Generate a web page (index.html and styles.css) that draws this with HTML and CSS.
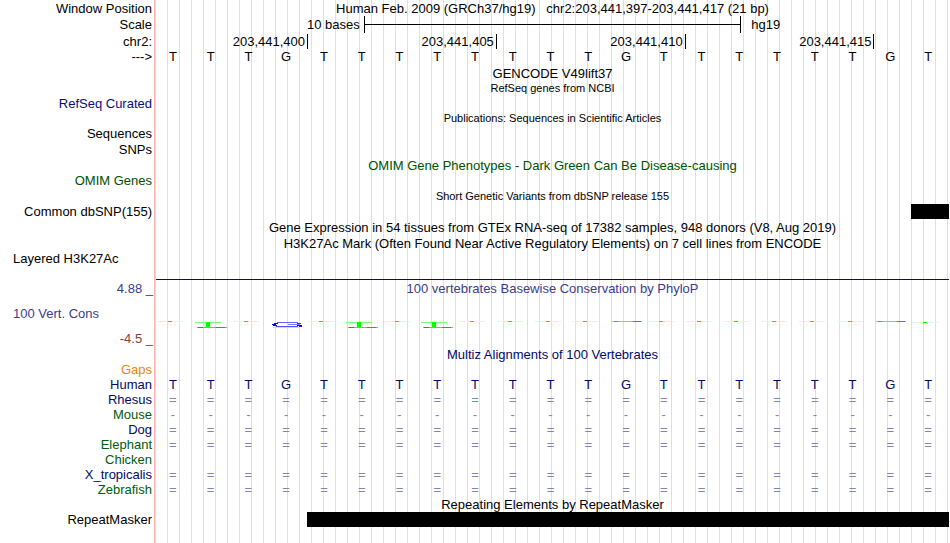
FILE: index.html
```
<!DOCTYPE html>
<html lang="en">
<head>
    <meta charset="UTF-8">
    <meta name="viewport" content="width=device-width, initial-scale=1.0">
    <title>chr2:203,441,397-203,441,417 - Human hg19</title>
    <link rel="stylesheet" href="styles.css">
</head>
<body>
    <svg class="symbols" aria-hidden="true">
        <symbol id="t-flat" viewBox="0 0 37 8">
            <rect x="1" y="0" width="26" height="1" fill="#e0f8e4"/>
            <rect x="12" y="0" width="4" height="1" fill="#14ee14"/>
        </symbol>
        <symbol id="t-low" viewBox="0 0 37 8">
            <rect x="1" y="1" width="26" height="1" fill="#e0f8e4"/>
            <rect x="12" y="1" width="4" height="1" fill="#14ee14"/>
        </symbol>
        <symbol id="t-tall" viewBox="0 0 37 8">
            <rect x="1" y="1" width="26" height="1" fill="#78ff78"/>
            <rect x="12" y="1" width="4" height="5" fill="#00ff00"/>
            <rect x="3" y="6" width="30" height="1" fill="#9696f0"/>
            <rect x="4" y="6" width="5" height="1" fill="#5a5ae6"/>
            <rect x="22" y="6" width="9" height="1" fill="#6464f0"/>
        </symbol>
        <symbol id="g-flat" viewBox="0 0 37 8">
            <rect x="3" y="0" width="30" height="1" fill="#aaaaf5"/>
            <rect x="5" y="0" width="4" height="1" fill="#7878e6"/>
            <rect x="24" y="0" width="8" height="1" fill="#6464f0"/>
        </symbol>
        <symbol id="g-tall" viewBox="0 0 37 8">
            <rect x="8" y="1" width="21" height="1" fill="#6464ff"/>
            <rect x="5" y="2" width="4" height="1" fill="#0000ff"/>
            <rect x="28" y="2" width="4" height="1" fill="#2828ff"/>
            <rect x="3" y="3" width="4" height="1" fill="#0000ff"/>
            <rect x="19" y="3" width="12" height="1" fill="#7878ff"/>
            <rect x="4" y="4" width="4" height="1" fill="#0000ff"/>
            <rect x="28" y="4" width="5" height="1" fill="#0000ff"/>
            <rect x="7" y="5" width="22" height="1" fill="#5050ff"/>
            <rect x="30" y="5" width="3" height="1" fill="#1414ff"/>
            <rect x="4" y="6" width="26" height="1" fill="#dcdccc"/>
        </symbol>
    </svg>

    <main class="browser">
        <div class="row title-row">
            <div class="label">Window Position</div>
            <div class="title">Human Feb. 2009 (GRCh37/hg19) &nbsp; chr2:203,441,397-203,441,417 (21 bp)</div>
        </div>
        <div class="row ruler-row">
            <div class="label">Scale</div>
            <div class="scale">
                <span class="scale-length">10 bases</span>
                <span class="scale-bar"></span>
                <span class="scale-db">hg19</span>
            </div>
        </div>
        <div class="row title-row">
            <div class="label">chr2:</div>
            <div class="ruler">
                <span class="tick first">203,441,400</span>
                <span class="tick">203,441,405</span>
                <span class="tick">203,441,410</span>
                <span class="tick">203,441,415</span>
            </div>
        </div>
        <div class="row title-row base-row">
            <div class="label">---&gt;</div>
            <div class="bases" data-seq="TTTGTTTTTTTTGTTTTTTGT"></div>
        </div>

        <!-- genes -->
        <div class="row title-row">
            <div class="title">GENCODE V49lift37</div>
        </div>
        <div class="row">
            <div class="title small">RefSeq genes from NCBI</div>
        </div>
        <div class="row">
            <div class="label refseq">RefSeq Curated</div>
        </div>
        <div class="row">
            <div class="title small">Publications: Sequences in Scientific Articles</div>
        </div>
        <div class="row">
            <div class="label">Sequences</div>
        </div>
        <div class="row ruler-row">
            <div class="label">SNPs</div>
        </div>

        <!-- variants -->
        <div class="row">
            <div class="title omim">OMIM Gene Phenotypes - Dark Green Can Be Disease-causing</div>
        </div>
        <div class="row">
            <div class="label omim">OMIM Genes</div>
        </div>
        <div class="row title-row">
            <div class="title small">Short Genetic Variants from dbSNP release 155</div>
        </div>
        <div class="row">
            <div class="label">Common dbSNP(155)</div>
            <div class="items"><span class="item snp"></span></div>
        </div>

        <!-- expression and regulation -->
        <div class="row ruler-row">
            <div class="title">Gene Expression in 54 tissues from GTEx RNA-seq of 17382 samples, 948 donors (V8, Aug 2019)</div>
        </div>
        <div class="row">
            <div class="title">H3K27Ac Mark (Often Found Near Active Regulatory Elements) on 7 cell lines from ENCODE</div>
        </div>
        <div class="row signal-row">
            <div class="label left">Layered H3K27Ac</div>
            <div class="signal"></div>
        </div>

        <!-- conservation -->
        <div class="row ruler-row">
            <div class="label limit phylop">4.88 _</div>
            <div class="title phylop">100 vertebrates Basewise Conservation by PhyloP</div>
        </div>
        <div class="row cons-row">
            <div class="cons-labels">
                <div class="label left phylop">100 Vert. Cons</div>
                <div class="label limit negative">-4.5 _</div>
            </div>
            <div class="logo" data-logo="t-flat t-tall t-flat g-tall t-flat t-tall t-flat t-tall t-flat t-flat t-flat t-flat g-flat t-flat t-flat t-flat t-flat t-flat t-flat g-flat t-low"></div>
        </div>
        <div class="row">
            <div class="title species">Multiz Alignments of 100 Vertebrates</div>
        </div>
        <div class="row">
            <div class="label gaps">Gaps</div>
        </div>
        <div class="row">
            <div class="label species">Human</div>
            <div class="bases species" data-seq="TTTGTTTTTTTTGTTTTTTGT"></div>
        </div>
        <div class="row">
            <div class="label species">Rhesus</div>
            <div class="bases unaligned" data-seq="====================="></div>
        </div>
        <div class="row">
            <div class="label species-alt">Mouse</div>
            <div class="bases unaligned" data-seq="---------------------"></div>
        </div>
        <div class="row">
            <div class="label species">Dog</div>
            <div class="bases unaligned" data-seq="====================="></div>
        </div>
        <div class="row">
            <div class="label species-alt">Elephant</div>
            <div class="bases unaligned" data-seq="====================="></div>
        </div>
        <div class="row">
            <div class="label species-alt">Chicken</div>
        </div>
        <div class="row">
            <div class="label species">X_tropicalis</div>
            <div class="bases unaligned" data-seq="====================="></div>
        </div>
        <div class="row">
            <div class="label species-alt">Zebrafish</div>
            <div class="bases unaligned" data-seq="====================="></div>
        </div>

        <!-- repeats -->
        <div class="row">
            <div class="title">Repeating Elements by RepeatMasker</div>
        </div>
        <div class="row">
            <div class="label">RepeatMasker</div>
            <div class="items"><span class="item repeat"></span></div>
        </div>
    </main>

    <script>
        // One cell per base
        document.querySelectorAll('.bases').forEach((row) => {
            row.innerHTML = [...row.dataset.seq].map((base) => `<span>${base}</span>`).join('');
        });

        // Sequence logo of the conservation score
        document.querySelectorAll('.logo').forEach((row) => {
            row.innerHTML = row.dataset.logo.split(' ').map((id) => `<svg><use href="#${id}"/></svg>`).join('');
        });
    </script>
</body>
</html>
```
FILE: styles.css
```
* {
    box-sizing: border-box;
}
body {
    margin: 0;
    background-color: #fff;
    color: #000;
    font-family: "Liberation Sans", Arial, Helvetica, sans-serif;
    font-size: 13px;
    line-height: 15px;
}
.symbols {
    display: none;
}
/* guide lines every 12px, hidden behind the label column */
.browser {
    min-height: 100vh;
    margin-right: 1px;
    background-image:
        linear-gradient(to right, #fff 154px, #ffb4b4 154px, #ffb4b4 155px, transparent 155px),
        linear-gradient(to right, transparent 11px, #dcdcf5 11px);
    background-size: 100% 100%, 12px 100%;
    background-repeat: no-repeat, repeat;
}
.row {
    display: grid;
    grid-template-columns: 156px minmax(0, 1fr);
    align-items: center;
    height: 15px;
    white-space: nowrap;
}
.title-row {
    height: 16px;
}
.ruler-row {
    height: 17px;
}
.base-row {
    align-items: start;
}
.label {
    grid-column: 1;
    padding-right: 4px;
    text-align: right;
}
.label.left {
    padding-left: 13px;
    text-align: left;
}
.label.limit {
    padding-right: 3px;
}
.title {
    grid-column: 2;
    text-align: center;
}
.small {
    font-size: 11px;
}

/* position ruler */
.scale {
    display: grid;
    grid-template-columns: 1fr calc(100% * 10 / 21) 1fr;
    align-items: center;
}
.scale-length {
    padding-right: 4px;
    text-align: right;
}
.scale-bar {
    height: 17px;
    border: solid #000;
    border-width: 0 1px;
    background: linear-gradient(#000, #000) center / 100% 1px no-repeat;
}
.scale-db {
    padding-left: 10px;
}
.ruler {
    display: grid;
    grid-template-columns: repeat(21, 1fr);
}
.tick {
    grid-column: span 5;
    margin-right: -1px;
    padding-right: 2px;
    border-right: 1px solid #000;
    text-align: right;
}
.tick.first {
    grid-column: span 4;
}
.bases {
    display: grid;
    grid-template-columns: repeat(21, 1fr);
    margin: 0 2px 0 -2px;
    text-align: center;
}

/* items */
.items {
    display: flex;
    justify-content: flex-end;
}
.item {
    height: 15px;
    background-color: #000;
}
.snp {
    width: calc(100% / 21);
}
.repeat {
    width: calc(100% * 17 / 21);
}

/* signal and conservation */
.signal-row {
    align-items: start;
    height: 29px;
}
.signal {
    align-self: end;
    border-bottom: 1px solid #1e0f28;
}
.cons-row {
    align-items: start;
    height: 50px;
}
.cons-labels {
    display: grid;
    gap: 10px;
    padding-top: 9px;
}
.logo {
    display: grid;
    grid-template-columns: repeat(21, 1fr);
    padding-top: 24px;
}
.logo svg {
    width: 37px;
    height: 8px;
    shape-rendering: crispEdges;
}

.refseq {
    color: #0c0c78;
}
.omim {
    color: #005000;
}
.phylop {
    color: #3c3c8c;
}
.negative {
    color: #8c3c3c;
}
.gaps {
    color: #e68a0a;
}
.species {
    color: #000a64;
}
.species-alt {
    color: #005a0a;
}
.unaligned {
    color: #8085b2;
}
```
